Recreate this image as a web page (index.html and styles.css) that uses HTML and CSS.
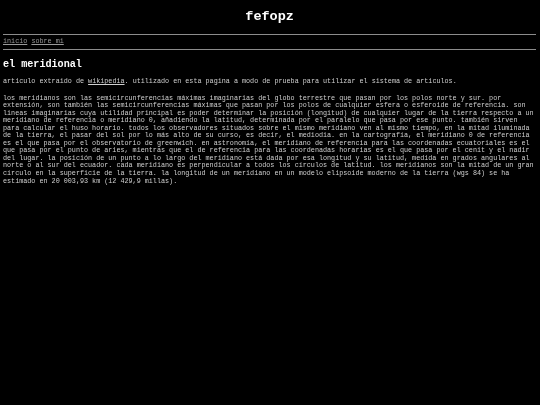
FILE: index.html
```html
<!DOCTYPE html>
<html>
<head>
<title>fefopz</title>
<link rel="stylesheet" href="styles.css">
</head>
<body>
  <h1 class="site-title">fefopz</h1>
  <hr class="rule">
  <nav class="menu">
    <a href="#">inicio</a>
    <a href="#">sobre mi</a>
  </nav>
  <hr class="rule">

  <div class="article">
    <h2>el meridional</h2>
    <p>articulo extraido de <a href="#">wikipedia</a>. utilizado en esta pagina a modo de prueba para utilizar el sistema de articulos.</p>
    <p>los meridianos son las semicircunferencias máximas imaginarias del globo terrestre que pasan por los polos norte y sur. por extensión, son también las semicircunferencias máximas que pasan por los polos de cualquier esfera o esferoide de referencia. son lineas imaginarias cuya utilidad principal es poder determinar la posición (longitud) de cualquier lugar de la tierra respecto a un meridiano de referencia o meridiano 0, añadiendo la latitud, determinada por el paralelo que pasa por ese punto. también sirven para calcular el huso horario. todos los observadores situados sobre el mismo meridiano ven al mismo tiempo, en la mitad iluminada de la tierra, el pasar del sol por lo más alto de su curso, es decir, el mediodia. en la cartografía, el meridiano 0 de referencia es el que pasa por el observatorio de greenwich. en astronomía, el meridiano de referencia para las coordenadas ecuatoriales es el que pasa por el punto de aries, mientras que el de referencia para las coordenadas horarias es el que pasa por el cenit y el nadir del lugar. la posición de un punto a lo largo del meridiano está dada por esa longitud y su latitud, medida en grados angulares al norte o al sur del ecuador. cada meridiano es perpendicular a todos los círculos de latitud. los meridianos son la mitad de un gran círculo en la superficie de la tierra. la longitud de un meridiano en un modelo elipsoide moderno de la tierra (wgs 84) se ha estimado en 20 003,93 km (12 429,9 millas).</p>
  </div>
</body>
</html>
```

FILE: styles.css
```css
html {
  background-color: #000;
}

body {
  margin: 0 3.4px;
  padding-top: 9px;
  background-color: #000;
  color: #cfcfcf;
  font-family: "Liberation Mono", "Courier New", monospace;
  font-size: 6.75px;
  line-height: 1.12;
  will-change: transform;
}

.site-title {
  text-align: center;
  font-size: 2em;
  margin: 0 0 10px;
  color: #fff;
}

.rule {
  border: none;
  border-top: 1px solid #8c8c8c;
  margin: 3px 0;
}

.menu a {
  color: #9a9a9a;
}

.article h2 {
  font-size: 1.5em;
  margin: 9px 0 8px;
  color: #fff;
}

.article p {
  margin: 8px 0;
}

.article p + p {
  margin-top: 9px;
}

.article a {
  color: #cfcfcf;
}
```
